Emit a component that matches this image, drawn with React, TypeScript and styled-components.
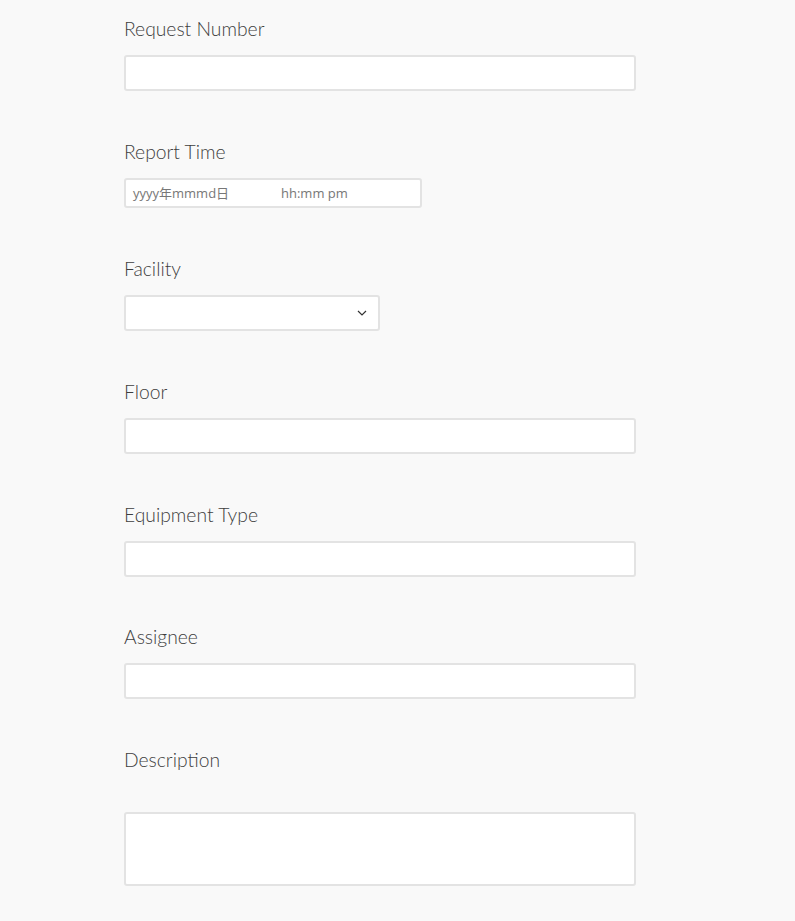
import React from "react";
import styled, { createGlobalStyle } from "styled-components";

const GlobalStyle = createGlobalStyle`
  body {
    margin: 0;
    background: #f9f9f9;
    font-family: Lato, "Open Sans", "Noto Sans CJK SC", sans-serif;
  }
`;

const Form = styled.form`
  padding: 18px 0 0 124px;
  display: flex;
  flex-direction: column;
  gap: 49.9px;
`;

const Field = styled.div`
  display: flex;
  flex-direction: column;
  align-items: flex-start;
`;

const Label = styled.label<{ $gap?: number }>`
  display: block;
  font-size: 19.3px;
  font-weight: 300;
  line-height: 22px;
  color: #3e3e3e;
  margin-bottom: ${(p) => p.$gap ?? 15}px;
`;

const boxStyles = `
  box-sizing: border-box;
  background: #fff;
  border: 2px solid #e3e3e3;
  border-radius: 3px;
  outline: none;
`;

const TextInput = styled.input<{ $width?: number }>`
  ${boxStyles}
  width: ${(p) => p.$width ?? 512}px;
  height: 36px;
  padding: 0 8px;
  font: inherit;
`;

const DateBox = styled.div`
  ${boxStyles}
  width: 298px;
  height: 30px;
  display: flex;
  align-items: center;
  padding-left: 7px;
  font-family: "Open Sans", "Noto Sans CJK SC", sans-serif;
  font-size: 13px;
  color: #777;
`;

const DatePart = styled.span<{ $width: number }>`
  display: inline-block;
  width: ${(p) => p.$width}px;
`;

const SelectWrap = styled.div`
  position: relative;
  width: 256px;
`;

const Select = styled.select`
  ${boxStyles}
  appearance: none;
  width: 256px;
  height: 36px;
  padding: 0 8px;
  font: inherit;
`;

const Chevron = styled.svg`
  position: absolute;
  right: 13px;
  top: 15px;
  pointer-events: none;
`;

const TextArea = styled.textarea`
  ${boxStyles}
  width: 512px;
  height: 74px;
  resize: none;
  padding: 8px;
  font: inherit;
  display: block;
`;

const fields = ["Floor", "Equipment Type", "Assignee"];

export default function App() {
  return (
    <>
      <GlobalStyle />
      <Form>
        <Field>
          <Label>Request Number</Label>
          <TextInput type="text" />
        </Field>
        <Field>
          <Label>Report Time</Label>
          <DateBox>
            <DatePart $width={148}>yyyy年mmmd日</DatePart>
            <DatePart $width={90}>hh:mm pm</DatePart>
          </DateBox>
        </Field>
        <Field>
          <Label>Facility</Label>
          <SelectWrap>
            <Select>
              <option value=""></option>
            </Select>
            <Chevron width="10" height="6" viewBox="0 0 10 6" fill="none">
              <path d="M1 1l4 4 4-4" stroke="#333" strokeWidth="1.2" />
            </Chevron>
          </SelectWrap>
        </Field>
        {fields.map((f) => (
          <Field key={f}>
            <Label>{f}</Label>
            <TextInput type="text" />
          </Field>
        ))}
        <Field>
          <Label $gap={41}>Description</Label>
          <TextArea />
        </Field>
      </Form>
    </>
  );
}
